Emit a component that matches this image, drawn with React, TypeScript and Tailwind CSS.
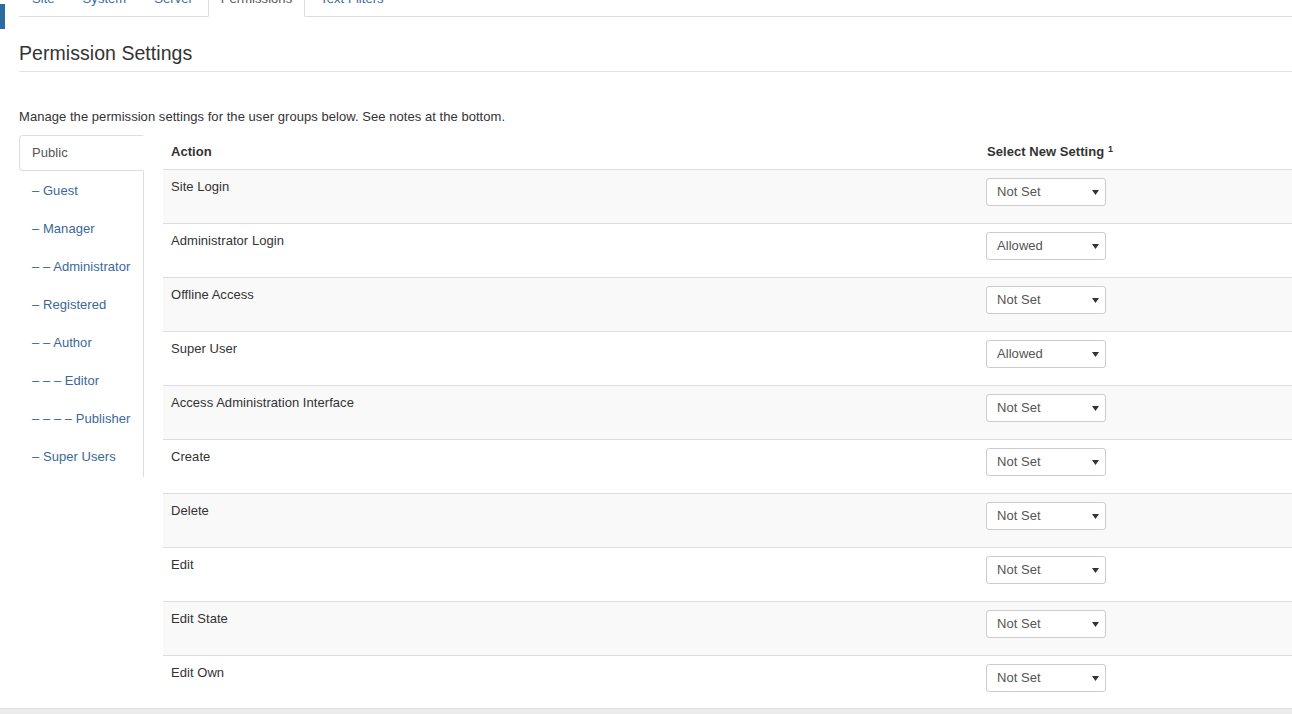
const tabs = ["Site", "System", "Server", "Permissions", "Text Filters"];

const groups = [
  "Public",
  "– Guest",
  "– Manager",
  "– – Administrator",
  "– Registered",
  "– – Author",
  "– – – Editor",
  "– – – – Publisher",
  "– Super Users",
];

const actions = [
  { name: "Site Login", value: "Not Set" },
  { name: "Administrator Login", value: "Allowed" },
  { name: "Offline Access", value: "Not Set" },
  { name: "Super User", value: "Allowed" },
  { name: "Access Administration Interface", value: "Not Set" },
  { name: "Create", value: "Not Set" },
  { name: "Delete", value: "Not Set" },
  { name: "Edit", value: "Not Set" },
  { name: "Edit State", value: "Not Set" },
  { name: "Edit Own", value: "Not Set" },
];

function FakeSelect({ value }: { value: string }) {
  return (
    <div className="w-[120px] h-[28px] mb-[9px] border border-[#ccc] rounded-[3px] bg-white flex items-center justify-between pl-[10px] pr-[6px] text-[#555]">
      <span>{value}</span>
      <svg width="7" height="5" viewBox="0 0 7 5">
        <path d="M0 0 L7 0 L3.5 5 Z" fill="#333" />
      </svg>
    </div>
  );
}

export default function App() {
  return (
    <div
      className="h-[714px] flex flex-col overflow-hidden bg-white text-[13px] leading-[18px] text-[#333] tracking-[0.05px]"
      style={{ fontFamily: '"Liberation Sans", Arial, sans-serif' }}
    >
      <div className="flex-1 min-h-0 overflow-hidden flex">
        <div className="w-[5px] h-[25px] mt-[4px] bg-[#2c6aa0] shrink-0" />

        <div className="flex-1 pl-[14px]">
          {/* top tabs */}
          <ul className="flex -mt-[19px] border-b border-[#ddd]">
            {tabs.map((t) => (
              <li key={t} className="-mb-px mr-[2px]">
                <div
                  className={
                    t === "Permissions"
                      ? "px-[12px] py-[8px] border border-[#ddd] border-b-white bg-white rounded-t-[4px] text-[#555]"
                      : "px-[12px] py-[8px] border border-transparent text-[#3a6899]"
                  }
                >
                  {t}
                </div>
              </li>
            ))}
          </ul>

          <h2 className="mt-[18px] text-[19.5px] leading-[36px] border-b border-[#e5e5e5]">
            Permission Settings
          </h2>

          <p className="mt-[36px] mb-[9px]">
            Manage the permission settings for the user groups below. See notes at the bottom.
          </p>

          <div className="flex items-start">
            {/* left group tabs */}
            <ul className="w-[125px] shrink-0 border-r border-[#ddd] mr-[19px]">
              {groups.map((g, i) => (
                <li key={g} className="mb-[2px]">
                  <div
                    className={
                      i === 0
                        ? "-mr-px px-[12px] py-[8px] border border-[#ddd] border-r-white bg-white rounded-l-[4px] text-[#555] whitespace-nowrap"
                        : "-mr-px px-[12px] py-[8px] border border-transparent text-[#3a6899] whitespace-nowrap"
                    }
                  >
                    {g}
                  </div>
                </li>
              ))}
            </ul>

            {/* permissions table */}
            <div className="flex-1">
              <div className="grid grid-cols-[816px_1fr] font-bold">
                <div className="p-[8px]">Action</div>
                <div className="p-[8px]">
                  Select New Setting <sup className="text-[9px]">1</sup>
                </div>
              </div>
              {actions.map((a, i) => (
                <div
                  key={a.name}
                  className={
                    "grid grid-cols-[816px_1fr] border-t border-[#ddd] " +
                    (i % 2 === 0 ? "bg-[#f9f9f9]" : "bg-white")
                  }
                >
                  <div className="px-[8px] pt-[8px]">{a.name}</div>
                  <div className="px-[7px] py-[8px]">
                    <FakeSelect value={a.value} />
                  </div>
                </div>
              ))}
            </div>
          </div>
        </div>
      </div>

      <div className="h-[6px] shrink-0 border-t border-[#dedede] bg-[#ebebeb]" />
    </div>
  );
}
